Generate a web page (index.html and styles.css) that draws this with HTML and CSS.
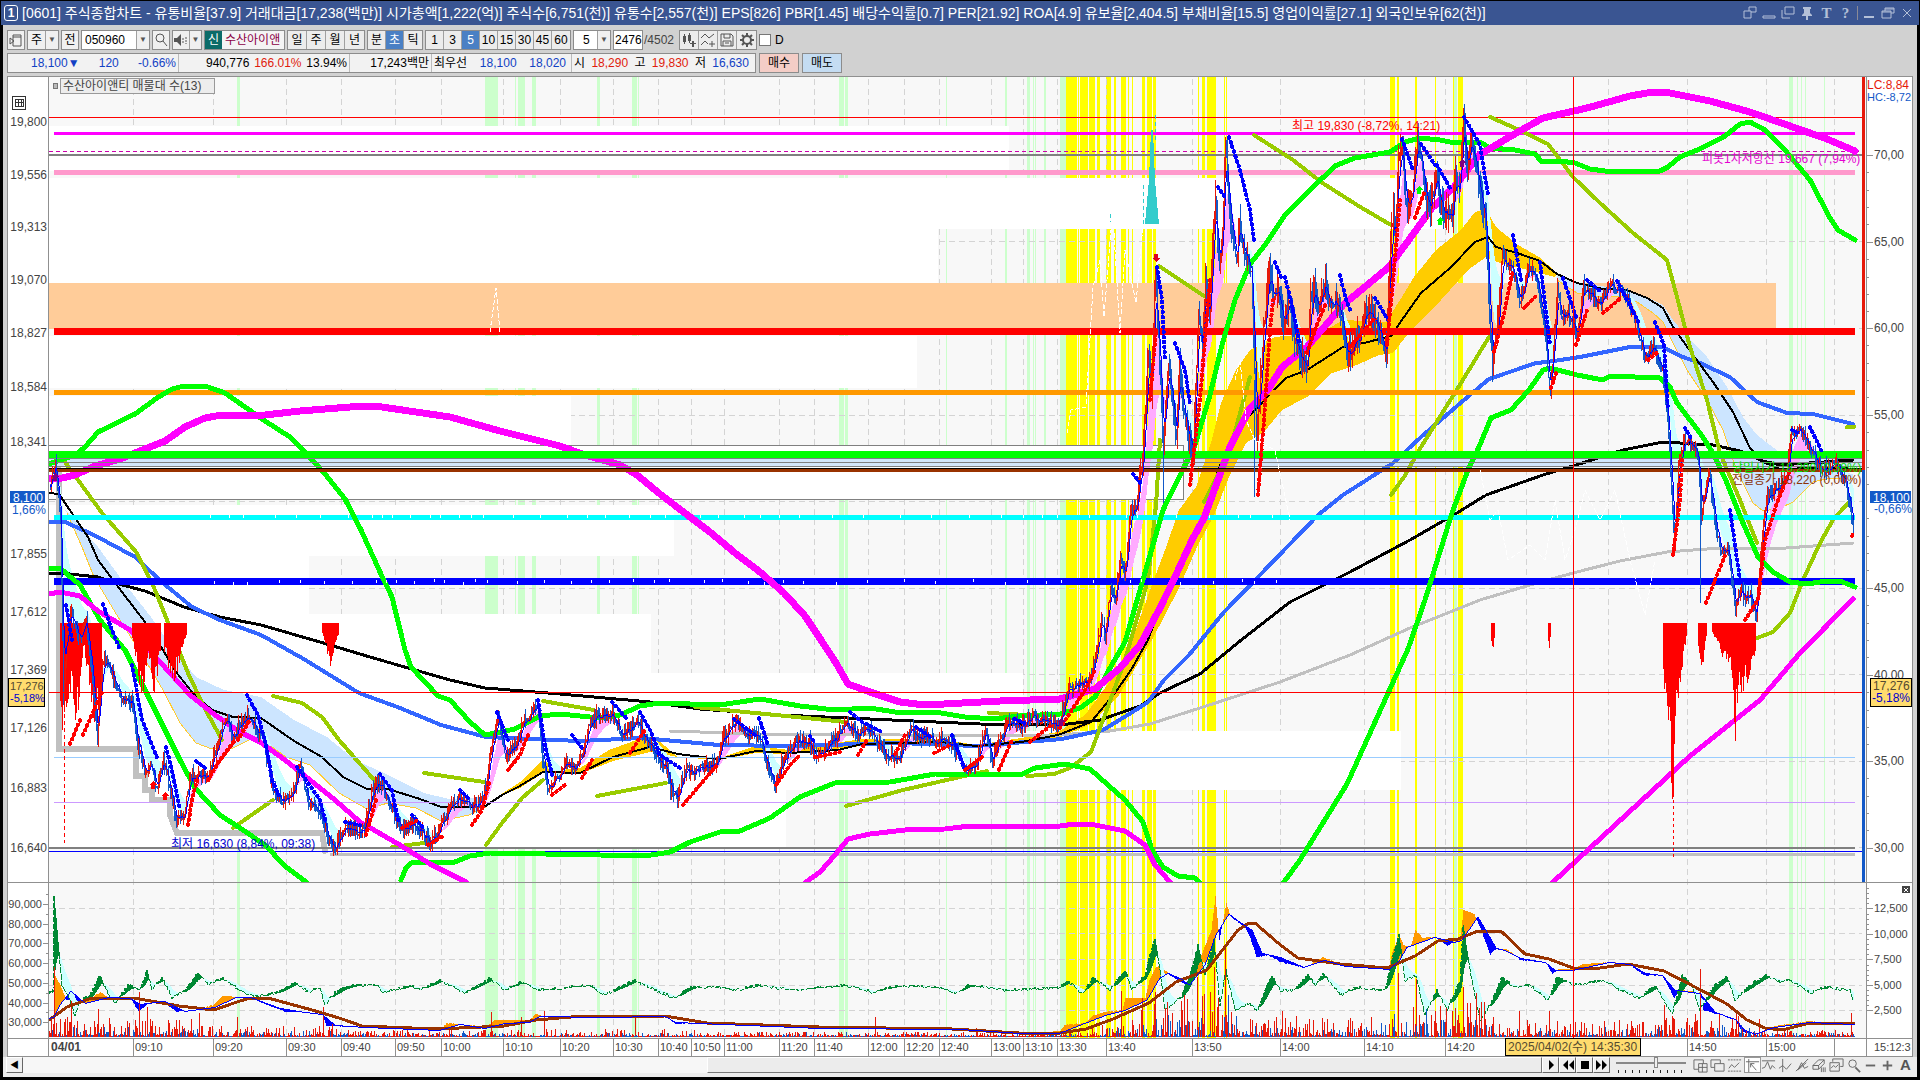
FILE: index.html
```html
<!DOCTYPE html>
<html lang="ko">
<head>
    <meta charset="UTF-8">
    <meta name="viewport" content="width=device-width, initial-scale=1.0">
    <title>[0601] 주식종합차트</title>
    <link rel="stylesheet" href="styles.css">
</head>
<body>
    <header class="titlebar">
        <span class="badge">1</span>
        <h1>[0601] 주식종합차트 - 유통비율[37.9] 거래대금[17,238(백만)] 시가총액[1,222(억)] 주식수[6,751(천)] 유통수[2,557(천)] EPS[826] PBR[1.45] 배당수익률[0.7] PER[21.92] ROA[4.9] 유보율[2,404.5] 부채비율[15.5] 영업이익률[27.1] 외국인보유[62(천)]</h1>
        <div class="window-buttons">
            <button aria-label="새 창"><svg viewBox="0 0 14 14"><path d="M1 5h7v7H1zM6 5V1h7v5H8"/></svg></button>
            <button aria-label="접기"><svg viewBox="0 0 14 14"><path d="M1 10h12v2H1z"/></svg></button>
            <button aria-label="복사"><svg viewBox="0 0 14 14"><path d="M4 1h9v7H4zM1 4v8h8"/></svg></button>
            <button aria-label="고정"><svg viewBox="0 0 14 14"><path class="solid" d="M3 1h8v2h-1v4l2 2v1H8v4H6v-4H2V9l2-2V3H3z"/></svg></button>
            <button class="serif">T</button>
            <button class="serif">?</button>
            <i></i>
            <button aria-label="최소화"><svg viewBox="0 0 14 14"><path class="solid" d="M2 10h10v2H2z"/></svg></button>
            <button aria-label="이전 크기"><svg viewBox="0 0 14 14"><path d="M4 5V2h9v5h-3M1 5h9v7H1zM4 3h9M1 6h9"/></svg></button>
            <button aria-label="닫기"><svg viewBox="0 0 14 14"><path d="M3 3l8 8M11 3l-8 8"/></svg></button>
        </div>
    </header>

    <main class="window">
        <div class="toolbar">
            <button class="tool" aria-label="메뉴"><svg viewBox="0 0 16 16"><path d="M5 3h8v11H5zM5 5h8M2 6v6l4-3z"/></svg></button>
            <div class="combo"><button>주</button><button class="arrow" aria-label="목록">▼</button></div>
            <button class="tool">전</button>
            <div class="combo code"><input type="text" value="050960" aria-label="종목코드"><button class="arrow" aria-label="종목 목록">▼</button></div>
            <button class="tool" aria-label="검색"><svg viewBox="0 0 16 16"><circle cx="7" cy="6" r="4"/><path d="M10 9l4 5"/></svg></button>
            <div class="combo sound"><button aria-label="소리"><svg viewBox="0 0 16 16"><path class="solid" d="M1 6h3l4-4v12l-4-4H1z"/><path d="M10 6v5M13 5v7" stroke-dasharray="2 1"/></svg></button><button class="arrow" aria-label="소리 목록">▼</button></div>
            <div class="stock"><b>신</b><span>수산아이앤</span></div>
            <div class="group wide"><button>일</button><button>주</button><button>월</button><button>년</button></div>
            <div class="group"><button>분</button><button class="on">초</button><button>틱</button></div>
            <div class="group"><button>1</button><button>3</button><button class="on">5</button><button>10</button><button>15</button><button>30</button><button>45</button><button>60</button></div>
            <div class="combo unit"><input type="text" value="5" aria-label="단위"><button class="arrow" aria-label="단위 목록">▼</button></div>
            <label class="count"><input type="text" value="2476" aria-label="봉 개수">/4502</label>
            <div class="group icons">
                <button aria-label="봉 추가"><svg viewBox="0 0 16 16"><path class="solid" d="M2 4h3v6H2zM7 3h3v6H7zM3 2h1v10H3zM8 1h1v10H8zM11 9h2v2h2v1h-2v3h-2v-3H9v-1h2z"/></svg></button>
                <button aria-label="지표 추가"><svg viewBox="0 0 16 16"><path d="M1 6l4-4 4 4 5-4M1 13l4-4 3 3M12 9v6M9 12h6"/></svg></button>
                <button aria-label="저장"><svg viewBox="0 0 16 16"><path d="M2 2h10l2 2v10H2zM5 2v4h6V2M4 14V9h8v5M6 11h4"/></svg></button>
                <button aria-label="설정"><svg viewBox="0 0 16 16"><circle class="gear" cx="8" cy="8" r="4"/><path class="teeth" d="M8 1v3M8 12v3M1 8h3M12 8h3M3 3l2 2M11 11l2 2M13 3l-2 2M5 11l-2 2"/></svg></button>
            </div>
            <label class="check"><input type="checkbox">D</label>
        </div>

        <div class="quote">
            <div class="quote-panel">
                <div class="cell c1 down"><span>18,100▼</span><span>120</span><span>-0.66%</span></div>
                <div class="cell c2"><span>940,776</span><span class="up">166.01%</span><span>13.94%</span></div>
                <div class="cell c3"><span>17,243백만</span></div>
                <div class="cell c4"><span>최우선</span><span class="down">18,100</span><span class="down">18,020</span></div>
                <div class="cell c5"><span>시</span><span class="up">18,290</span><span>고</span><span class="up">19,830</span><span>저</span><span class="down">16,630</span></div>
            </div>
            <button class="buy">매수</button>
            <button class="sell">매도</button>
        </div>

        <svg class="chart" viewBox="7 76 1906 981">
            <defs>
                <clipPath id="priceClip"><rect x="49" y="77" width="1813" height="805"/></clipPath>
            </defs>
            <rect class="paper" x="7" y="76" width="1906" height="981"/>
            <rect class="plot" x="49" y="77" width="1817" height="961"/>
            <g id="stripes"></g>
            <g id="grid"></g>
            <g id="profile"></g>
            <g id="price" clip-path="url(#priceClip)"></g>
            <g id="volume"></g>

            <g class="note">
                <rect class="mark" x="53" y="83" width="4" height="5"/>
                <rect class="legend" x="60" y="78" width="154" height="15"/>
                <text x="63" y="90">수산아이앤티 매물대 수(13)</text>
                <text class="t-red" x="1292" y="130">최고 19,830 (-8,72%, 14:21)</text>
                <text class="t-navy" x="171" y="848">최저 16,630 (8,84%, 09:38)</text>
                <text class="t-pink" x="1702" y="163">피봇1차저항선 19,667 (7,94%)</text>
                <text class="t-green" x="1732" y="472">당일시가 18,290 (0,38%)</text>
                <text class="t-brown" x="1732" y="484">전일종가 18,220 (0,00%)</text>
            </g>

            <g class="frame">
                <path d="M7 76.5H1913M7.500 76V1057M48.500 77V1057M1866.500 77V1057M1912.500 76V1057M7 882.500H1913M7 1038.500H1913M7 1056.500H1913"/>
                <path class="limit-up" d="M1863.500 77V470"/>
                <path class="limit-down" d="M1863.500 470V882"/>
                <path class="cross" d="M49 692.500H1862M1573.500 77V1038"/>
            </g>
            <g id="axes" class="axis"></g>

            <g class="tags">
                <rect class="tag-blue" x="10" y="491" width="35" height="12"/>
                <text class="t-white" x="13" y="502">8,100</text>
                <text class="t-blue" x="12" y="514">1,66%</text>
                <rect class="tag-blue" x="1870" y="491" width="41" height="12"/>
                <text class="t-white" x="1873" y="502">18,100</text>
                <text class="t-blue" x="1874" y="513">-0,66%</text>
                <rect class="tag-yellow" x="8.500" y="678.500" width="36" height="28"/>
                <text class="t-gray small" x="10" y="690">17,276</text>
                <text class="t-navy small" x="10" y="702">-5,18%</text>
                <rect class="tag-yellow" x="1870.500" y="678.500" width="41" height="28"/>
                <text class="t-gray" x="1873" y="690">17,276</text>
                <text class="t-navy" x="1872" y="702">-5,18%</text>
                <rect class="tag-yellow" x="1505.500" y="1038.500" width="135" height="17"/>
                <text class="t-gray" x="1508" y="1051">2025/04/02(수) 14:35:30</text>
                <text class="t-lc" x="1867" y="89">LC:8,84</text>
                <text class="t-hc small" x="1867" y="101">HC:-8,72</text>
                <rect class="close-box" x="1902" y="886" width="8" height="7"/>
                <path class="close-x" d="M1904 888l4 4M1908 888l-4 4"/>
            </g>
            <svg class="frame-icon" x="12" y="96" width="14" height="14" viewBox="0 0 14 14"><path d="M.5.5h13v13H.5zM3 3.500h8v7H3zM3 6.500h8M6.500 3v8M9.500 3v8"/></svg>
        </svg>

        <footer class="bottom">
            <button class="key" aria-label="왼쪽">◀</button>
            <div class="track"><div class="thumb"></div></div>
            <div class="keys">
                <button class="key" aria-label="재생"><svg viewBox="0 0 12 12"><path class="solid" d="M4 1l5 5-5 5z"/></svg></button>
                <button class="key" aria-label="뒤로"><svg viewBox="0 0 12 12"><path class="solid" d="M6 1v10L1 6zM12 1v10L7 6z"/></svg></button>
                <button class="key" aria-label="정지"><svg viewBox="0 0 12 12"><path class="solid" d="M2 2h8v8H2z"/></svg></button>
                <button class="key" aria-label="앞으로"><svg viewBox="0 0 12 12"><path class="solid" d="M0 1v10l5-5zM6 1v10l5-5z"/></svg></button>
            </div>
            <div class="speed"><input type="range" min="0" max="100" value="57" aria-label="속도"></div>
            <div class="draw-tools">
                <button aria-label="창 추가"><svg viewBox="0 0 16 16"><path d="M1 2h10v10H1z"/><path class="over" d="M6 6h9v9H6z"/><path d="M6 10h9M10 6v9"/></svg></button>
                <button aria-label="겹치기"><svg viewBox="0 0 16 16"><path d="M1 2h10v8H1z"/><path class="over" d="M5 6h10v8H5z"/></svg></button>
                <button aria-label="영역"><svg viewBox="0 0 16 16"><path d="M1 2h14M1 14h14" stroke-dasharray="2 1"/><path d="M2 11l3-4 3 3 5-5"/></svg></button>
                <button class="on" aria-label="십자선"><svg viewBox="0 0 16 16"><path d="M1 4h14M4 1v14M6 6l6 7M6 10V6h4"/></svg></button>
                <button aria-label="추세선"><svg viewBox="0 0 16 16"><path d="M1 3h14M1 11l3-1 3-6 3 8 2-4 3 3"/></svg></button>
                <button aria-label="수직선"><svg viewBox="0 0 16 16"><path d="M5 1v14M1 11l4-3 4 4 5-6"/></svg></button>
                <button aria-label="그리기"><svg viewBox="0 0 16 16"><path d="M1 14L14 1M3 13l4-8 3 6 4-2M4 12l8-7"/></svg></button>
                <button aria-label="지우개"><svg viewBox="0 0 16 16"><path d="M1 8l6-6h6l-6 6zM1 8h6v4H1zM7 12l6-6V2M10 10v5M12 10v5M14 10v5"/></svg></button>
                <button aria-label="보기"><svg viewBox="0 0 16 16"><path d="M4 4V1h11v8h-3M1 5h10v9H1zM2 11l3-3 2 2 3-3"/></svg></button>
                <button aria-label="확대경"><svg viewBox="0 0 16 16"><circle cx="7" cy="6" r="4"/><path class="bold" d="M10 10l5 5"/></svg></button>
                <button aria-label="축소"><svg viewBox="0 0 16 16"><path class="bold" d="M3 8h10"/></svg></button>
                <button aria-label="확대"><svg viewBox="0 0 16 16"><path class="bold" d="M3 8h10M8 3v10"/></svg></button>
                <button class="letter">A</button>
            </div>
        </footer>
    </main>
    <script src="chart.js"></script>
</body>
</html>
```
FILE: styles.css
```css
* {
    box-sizing: border-box;
}

body {
    margin: 0;
    padding: 1px 1px 3px;
    min-height: 100vh;
    background-color: black;
    font-family: "Liberation Sans", "Noto Sans CJK KR", sans-serif;
    font-size: 12px;
    line-height: 16px;
}

button,
input {
    font: inherit;
    color: inherit;
    margin: 0;
    padding: 0;
    border: none;
    border-radius: 0;
    background: none;
}

svg {
    display: block;
}

/* title bar */
.titlebar {
    display: flex;
    align-items: center;
    gap: 4px;
    height: 24px;
    padding: 0 4px 0 3px;
    background-color: #3a5592;
    color: white;
}

.titlebar h1 {
    flex: 1;
    margin: 0;
    white-space: nowrap;
    font-size: 14px;
    font-weight: normal;
    line-height: 20px;
}

.badge {
    width: 14px;
    height: 16px;
    border: 1px solid white;
    border-radius: 3px;
    font-weight: bold;
    line-height: 14px;
    text-align: center;
}

.window-buttons {
    display: flex;
    align-items: center;
    gap: 4px;
    color: #b4c0d8;
}

.window-buttons button {
    width: 15px;
    height: 16px;
}

.window-buttons svg {
    width: 14px;
    height: 14px;
    fill: none;
    stroke: #b4c0d8;
}

.window-buttons .serif {
    font: bold 15px "Liberation Serif", serif;
}

.window-buttons i {
    width: 1px;
    height: 14px;
    background-color: #8a8a96;
}

.window-buttons .solid {
    fill: #b4c0d8;
    stroke: none;
}

/* toolbar */
.window {
    margin: 0 2px;
    padding: 5px 4px 0;
    background-color: #d1d1d1;
}

.toolbar {
    display: flex;
    gap: 2px;
    height: 20px;
}

.toolbar svg {
    width: 16px;
    height: 16px;
    margin: auto;
    fill: none;
    stroke: #555;
}

.toolbar .solid {
    fill: #555;
    stroke: none;
}

.gear,
.teeth {
    stroke-width: 2;
}

.tool,
.combo,
.group {
    border: 1px solid #8c8c8c;
    background-color: #f0f0f0;
}

.tool {
    width: 18px;
}

.combo,
.group {
    display: flex;
}

.combo button {
    width: 17px;
}

.combo .arrow {
    width: 13px;
    border-left: 1px solid #a0a0a0;
    background-color: #f0f0f0;
    color: #555;
    font-size: 8px;
}

.combo input {
    min-width: 0;
    flex: 1;
    padding-left: 3px;
    background-color: white;
}

.code {
    width: 69px;
}

.sound {
    width: 30px;
}

.unit {
    width: 38px;
}

.unit input {
    padding-left: 9px;
}

.stock {
    display: flex;
    width: 81px;
    border: 1px solid #8c8c8c;
    background-color: #f4f4f4;
    color: #8b0045;
    line-height: 18px;
    white-space: nowrap;
}

.stock b {
    width: 17px;
    margin-right: 3px;
    background-color: #0b6b68;
    color: white;
    font-weight: normal;
    text-align: center;
}

.group button {
    width: 18px;
    border-right: 1px solid #a0a0a0;
    background-color: #ececec;
}

.group.wide button {
    width: 19px;
}

.group button:last-child {
    border-right: none;
}

.group .on {
    background-color: #4a80c4;
    color: white;
}

.count {
    display: flex;
    line-height: 20px;
    width: 64px;
    color: #444;
}

.count input {
    width: 30px;
    margin-right: 1px;
    padding-left: 1px;
    border: 1px solid #8c8c8c;
    background-color: white;
    color: black;
}

.icons button {
    width: 19px;
}

.check {
    display: flex;
    align-items: center;
    gap: 4px;
}

.check input {
    appearance: none;
    width: 12px;
    height: 12px;
    border: 1px solid #777;
    background-color: white;
}

/* quote row */
.quote {
    display: flex;
    gap: 3px;
    height: 20px;
    margin: 3px 0;
}

.quote-panel {
    display: flex;
    border: 1px solid #8c8c8c;
    background-color: #f2f2f2;
    line-height: 18px;
    white-space: nowrap;
}

.cell {
    display: flex;
    justify-content: space-between;
    padding: 0 2px;
    border-right: 1px solid #bbb;
}

.cell:last-child {
    border-right: none;
}

.c1 {
    width: 171px;
    padding-left: 23px;
}

.c2 {
    width: 171px;
    padding-left: 27px;
}

.c3 {
    width: 82px;
    justify-content: flex-end;
}

.c4 {
    width: 140px;
    padding-right: 5px;
}

.c5 {
    width: 183px;
    padding-right: 6px;
}

.up {
    color: #e01b0c;
}

.down {
    color: #1141c4;
}

.buy,
.sell {
    width: 40px;
    border: 1px solid #8c8c8c;
}

.buy {
    background-color: #f4cdc6;
}

.sell {
    background-color: #c4dcf2;
}

/* chart */
.chart {
    width: 100%;
    height: auto;
    shape-rendering: crispEdges;
    fill: none;
}

.paper {
    fill: white;
}

.plot {
    fill: #f8f8f8;
}

.grid-line {
    stroke: #d4d4d4;
    stroke-dasharray: 6 4;
}

.frame path {
    stroke: #909090;
}

.frame .limit-up {
    stroke: #e6190a;
    stroke-width: 3;
}

.frame .limit-down {
    stroke: #1259c8;
    stroke-width: 3;
}

.frame .cross {
    stroke: red;
}

.frame-icon {
    stroke: #333;
}

.chart text {
    font-size: 12px;
    fill: #444;
}

.chart .small {
    font-size: 11px;
}

.axis path {
    stroke: #909090;
}

.axis .left {
    text-anchor: end;
}

.axis .day {
    font-weight: bold;
}

.legend {
    fill: #ededed;
    stroke: #999;
}

.mark {
    fill: #bbb;
    stroke: #777;
}

.chart .t-red {
    fill: red;
}

.chart .t-navy {
    fill: #0000d0;
}

.chart .t-pink {
    fill: #e400d0;
}

.chart .t-green {
    fill: #00e000;
}

.chart .t-brown {
    fill: #8a3208;
}

.chart .t-white {
    fill: white;
}

.chart .t-blue,
.chart .t-hc {
    fill: #1259c8;
}

.chart .t-gray {
    fill: #554a30;
}

.chart .t-lc {
    fill: #e6190a;
}

.tag-blue {
    fill: #1259c8;
}

.tag-yellow {
    fill: #ffdc6e;
    stroke: black;
}

.close-box {
    fill: #444;
}

.close-x {
    stroke: white;
}

/* bottom bar */
.bottom {
    display: flex;
    height: 20px;
    margin: 0 -4px;
    padding: 0 3px 4px;
    background-color: #ececec;
}

.key {
    width: 17px;
    height: 16px;
    border: 1px solid;
    border-color: #fff #666 #666 #fff;
    background-color: #f0f0f0;
    font-size: 9px;
    line-height: 12px;
}

.key svg {
    width: 12px;
    height: 12px;
    margin: auto;
}

.track {
    display: flex;
    flex: 1;
    background-color: #f7f7f7;
}

.thumb {
    width: 55%;
    margin-left: auto;
    border: 1px solid;
    border-color: #fff #777 #777 #fff;
    background-color: #ececec;
}

.keys {
    display: flex;
    width: 69px;
}

.speed {
    width: 82px;
    padding: 0 5px;
    background: repeating-linear-gradient(90deg, #222 0 1px, transparent 1px 7px) 7px 13px / 68px 3px no-repeat;
}

.speed input {
    display: block;
    appearance: none;
    width: 70px;
    height: 10px;
    background: linear-gradient(#888, #888) 0 5px / 100% 2px no-repeat;
}

.speed input::-webkit-slider-thumb {
    appearance: none;
    width: 4px;
    height: 11px;
    border: 1px solid #888;
    background-color: #f0f0f0;
}

.draw-tools {
    display: flex;
}

.draw-tools button {
    width: 17px;
    height: 16px;
}

.draw-tools .on {
    border: 1px solid #999;
    background-color: white;
}

.draw-tools svg {
    width: 15px;
    height: 15px;
    fill: none;
    stroke: #666;
}

.draw-tools .over {
    fill: #ececec;
}

.draw-tools .bold {
    stroke-width: 2;
}

.draw-tools .letter {
    color: #555;
    font-size: 15px;
    font-weight: bold;
}
```
FILE: chart.js
```javascript
const SVG_NS = 'http://www.w3.org/2000/svg';

const stripes = document.getElementById('stripes');
const grid = document.getElementById('grid');
const profile = document.getElementById('profile');
const price = document.getElementById('price');
const volume = document.getElementById('volume');
const axes = document.getElementById('axes');

// fixed seed, so every load draws the same bars
let seed = 7;
function random() {
    seed = (seed * 16807) % 2147483647;
    return seed / 2147483647;
}

function add(parent, name, attrs, text) {
    const node = document.createElementNS(SVG_NS, name);
    for (const key in attrs) node.setAttribute(key, attrs[key]);
    if (text) node.textContent = text;
    parent.appendChild(node);
}

function rect(parent, x, y, width, height, fill) {
    add(parent, 'rect', { x, y, width, height, fill });
}

// "x,y x,y ..." -> [[x, y], ...]
function points(str) {
    return str.trim().split(/\s+/).map(p => p.split(',').map(Number));
}

function line(parent, pts, color, width, extra) {
    add(parent, 'polyline', Object.assign({
        points: pts, stroke: color, 'stroke-width': width,
        'stroke-linejoin': 'round', 'stroke-linecap': 'round'
    }, extra));
}

function hline(y, color, width, x1 = 54, x2 = 1855) {
    add(price, 'path', { d: `M${x1} ${y}H${x2}`, stroke: color, 'stroke-width': width });
}

function sample(pts, noise) {
    const out = [];
    let i = 0;
    for (let x = pts[0][0]; x <= pts[pts.length - 1][0]; x++) {
        while (i < pts.length - 2 && x > pts[i + 1][0]) i++;
        const [x1, y1] = pts[i];
        const [x2, y2] = pts[i + 1];
        out.push([x, y1 + (y2 - y1) * (x - x1) / (x2 - x1) + (random() - 0.5) * noise]);
    }
    return out;
}

function average(series, length) {
    let value = series[0][1];
    return series.map(([x, y]) => {
        value += (y - value) * 2 / (length + 1);
        return [x, value];
    });
}

function between(parent, a, b, above, below) {
    let up = '';
    let down = '';
    for (let i = 0; i < a.length; i++) {
        const top = Math.round(Math.min(a[i][1], b[i][1]));
        const bottom = Math.round(Math.max(a[i][1], b[i][1]));
        const d = `M${a[i][0] + 0.5} ${top}V${bottom}`;
        if (a[i][1] < b[i][1]) up += d;
        else down += d;
    }
    add(parent, 'path', { d: up, stroke: above });
    add(parent, 'path', { d: down, stroke: below });
}

// signal stripes
[[237, 3], [485, 13], [515, 1], [518, 7], [532, 4], [597, 3], [632, 5], [638, 1], [839, 5], [845, 3], [946, 1], [1005, 2],
 [1027, 3], [1033, 1], [1035, 1], [1044, 2], [1060, 6], [1454, 3], [1789, 4], [1797, 1], [1801, 1], [1805, 1], [1824, 1]]
    .forEach(([x, w]) => rect(stripes, x, 77, w, 961, '#ccffcc'));
[[1066, 11], [1078, 1], [1080, 8], [1089, 6], [1097, 3], [1106, 5], [1114, 2], [1121, 5], [1128, 1], [1132, 1], [1142, 3],
 [1147, 5], [1153, 3], [1198, 1], [1202, 3], [1207, 9], [1224, 1], [1226, 1], [1390, 5], [1397, 2], [1415, 2], [1435, 1],
 [1453, 1], [1458, 5]]
    .forEach(([x, w]) => rect(stripes, x, 77, w, 961, 'yellow'));

// time axis and grid
const times = [[49, '04/01'], [133, '09:10'], [213, '09:20'], [286, '09:30'], [341, '09:40'], [395, '09:50'], [441, '10:00'],
    [503, '10:10'], [560, '10:20'], [613, '10:30'], [658, '10:40'], [691, '10:50'], [724, '11:00'], [779, '11:20'],
    [814, '11:40'], [868, '12:00'], [904, '12:20'], [939, '12:40'], [991, '13:00'], [1023, '13:10'], [1057, '13:30'],
    [1106, '13:40'], [1192, '13:50'], [1280, '14:00'], [1364, '14:10'], [1445, '14:20'], [1526, ''], [1608, ''],
    [1687, '14:50'], [1766, '15:00'], [1834, '']];
times.forEach(([x, label], i) => {
    if (i) {
        add(grid, 'path', { class: 'grid-line', d: `M${x}.5 79V1038` });
        if (x !== 1608 && x !== 1526) add(axes, 'path', { d: `M${x}.5 1038V1056` });
    }
    if (label) add(axes, 'text', { x: x + 2, y: 1051, class: i ? 'small' : 'day' }, label);
});
add(axes, 'text', { x: 1874, y: 1051, class: 'small' }, '15:12:3');

[155, 241, 328, 415, 501, 588, 674, 761, 847, 908, 933, 959, 985, 1010].forEach(y =>
    add(grid, 'path', { class: 'grid-line', d: `M49 ${y}.5H1862` }));

[['19,800', 122], ['19,556', 175], ['19,313', 227], ['19,070', 280], ['18,827', 333], ['18,584', 387], ['18,341', 442],
 ['17,855', 554], ['17,612', 612], ['17,369', 670], ['17,126', 728], ['16,883', 788], ['16,640', 848]]
    .forEach(([label, y]) => add(axes, 'text', { x: 47, y: y + 4, class: 'left' }, label));
['70,00', '65,00', '60,00', '55,00', '', '45,00', '40,00', '35,00', '30,00'].forEach((label, i) => {
    const y = Math.round(155 + i * 86.6);
    if (label) {
        add(axes, 'path', { d: `M1867 ${y}.5h6` });
        add(axes, 'text', { x: 1874, y: y + 4 }, label);
    }
    for (let k = 1; k < 5 && i < 8; k++) add(axes, 'path', { d: `M1867 ${Math.round(y + k * 17.3)}.5h2` });
});
['90,000', '80,000', '70,000', '60,000', '50,000', '40,000', '30,000'].forEach((label, i) => {
    const y = Math.round(904 + i * 19.7);
    add(axes, 'path', { d: `M43 ${y}.5h5M46 ${y - 10}.5h2` });
    add(axes, 'text', { x: 42, y: y + 4, class: 'left small' }, label);
});
['12,500', '10,000', '7,500', '5,000', '2,500'].forEach((label, i) => {
    const y = Math.round(908 + i * 25.5);
    add(axes, 'path', { d: `M1867 ${y}.5h6M1867 ${y - 5}.5h2M1867 ${y - 10}.5h2M1867 ${y - 15}.5h2M1867 ${y - 20}.5h2` });
    add(axes, 'text', { x: 1874, y: y + 4, class: 'small' }, label);
});

// volume by price
[[126, 45, 1009], [178, 51, 1443], [229, 54, 938], [336, 52, 917], [396, 49, 571], [445, 54, 1183], [505, 51, 674],
 [556, 58, 309], [614, 59, 651], [673, 58, 1023], [731, 59, 1401], [790, 58, 786]]
    .forEach(([y, h, x]) => rect(profile, 49, y, x - 49, h, 'white'));
rect(profile, 49, 283, 1727, 46, '#ffcc99');
rect(profile, 49, 459, 1813, 7, '#d2e6fb');

// support and resistance lines
hline(117.5, 'red', 1, 49, 1862);
hline(133.5, 'magenta', 3);
add(price, 'path', { d: 'M49 151.5H1862', stroke: '#cc00aa', 'stroke-dasharray': '4 3' });
hline(155, '#808080', 2, 49, 1862);
hline(172.5, '#ff99cc', 5);
add(price, 'path', { d: 'M49 445.5H1183.5V499.5H49', stroke: '#808080' });

// clouds
function cloud(upper, lower, fill) {
    add(price, 'polygon', { points: upper + ' ' + points(lower).reverse().join(' '), fill });
}
const leftLow = '67,513 82,547 94,577 118,617 141,653 163,690 180,723 196,743 212,749 233,748 253,738 265,742 286,757 310,765 339,793 367,809 388,803 416,808 441,821 469,815 486,807';
cloud('64,508 98,547 122,580 151,617 176,653 196,677 224,690 261,697 294,720 327,737 355,760 384,773 424,793 449,799 482,797', leftLow, '#cce5ff');
line(price, leftLow, '#ffcc33', 1);
cloud('500,795 520,782 543,760 560,770 580,768 609,750 642,738 658,740 678,757 719,758 756,746 789,750 862,739 940,739 976,745 1021,738 1058,732 1085,715 1111,680 1131,643 1150,590 1165,550 1179,510 1196,487 1211,443 1221,403 1236,370 1250,350 1275,337 1296,335 1321,333 1343,320 1386,322 1400,300 1414,277 1436,250 1461,230 1475,212 1486,209 1496,227 1518,245 1539,257 1557,273',
    '500,796 520,788 543,773 580,774 613,761 650,752 678,757 719,760 756,753 789,754 862,746 940,744 976,747 1021,744 1058,738 1091,724 1119,695 1152,640 1178,590 1198,545 1214,515 1229,477 1246,443 1264,432 1282,410 1307,397 1332,373 1357,365 1379,355 1393,353 1411,330 1432,310 1450,290 1468,270 1486,257 1500,263 1520,268 1555,277', '#ffcc00');
const rightLow = '1557,280 1577,293 1597,297 1620,296 1637,302 1653,313 1663,322 1673,343 1687,370 1707,400 1723,430 1733,460 1743,483 1753,503 1763,511 1780,508 1793,502 1813,482 1830,478 1853,478';
cloud('1557,275 1580,283 1607,287 1627,289 1647,297 1663,305 1673,320 1687,337 1707,357 1727,387 1743,417 1757,435 1770,445 1778,451 1790,457 1810,467 1853,474', rightLow, '#cce5ff');
line(price, rightLow, '#ffcc33', 1);

// lowest-low steps
line(price, '59,470 59,749 136,749 136,776 145,776 145,790 152,790 152,800 170,800 170,815 177,833 322,833 325,851', '#c0c0c0', 6, { 'stroke-linejoin': 'miter' });
hline(854, '#c0c0c0', 3, 330, 1855);

const series = sample(points(`49,490 55,462 60,520 63,700 66,640 70,610 80,640 86,620 92,680 97,740 102,660 108,665 114,680 122,700
    132,702 136,740 144,770 150,765 156,790 163,760 170,790 176,822 184,815 190,775 200,775 208,777 215,750 226,715 232,740
    240,725 250,715 256,730 264,745 270,780 278,800 290,800 300,768 308,800 322,815 330,845 336,846 345,825 355,832 364,830
    372,790 380,783 388,800 396,822 404,830 412,822 420,830 428,842 436,838 446,815 452,800 462,800 472,810 480,802 486,785
    492,740 498,718 505,755 515,745 525,720 537,705 542,760 548,790 556,780 566,765 576,770 583,750 590,720 600,715 612,715
    622,735 628,730 636,720 645,740 655,755 665,765 670,790 677,800 684,770 695,772 705,765 716,765 722,740 735,722 748,735
    760,740 768,770 775,785 782,760 795,742 808,740 815,760 830,745 845,725 858,735 870,730 885,755 900,758 910,730 925,740
    945,740 955,750 965,770 975,768 985,730 992,760 1000,740 1010,720 1020,728 1030,718 1045,718 1058,728 1068,690 1090,680
    1096,650 1101,620 1105,640 1110,585 1115,600 1120,555 1125,575 1130,510 1136,510 1142,460 1145,410 1148,350 1151,390
    1155,270 1158,340 1163,450 1168,360 1172,400 1176,440 1179,370 1182,400 1188,440 1193,450 1198,310 1202,350 1205,280
    1209,320 1212,250 1215,200 1219,270 1222,240 1225,140 1229,210 1233,240 1236,265 1239,220 1243,250 1251,270 1256,440
    1260,380 1263,330 1269,270 1273,300 1277,290 1283,325 1289,300 1295,345 1301,360 1307,365 1310,300 1314,290 1318,310
    1325,280 1330,310 1335,300 1341,320 1347,360 1353,345 1360,335 1366,310 1375,320 1386,355 1390,240 1393,210 1395,240
    1398,160 1402,150 1406,210 1411,200 1417,140 1421,160 1426,200 1430,212 1436,170 1440,205 1444,212 1452,215 1455,180
    1459,190 1463,120 1467,175 1471,140 1476,170 1480,200 1485,220 1489,320 1492,362 1498,320 1502,250 1508,270 1512,265
    1517,295 1520,300 1528,265 1536,280 1544,330 1550,395 1557,290 1562,320 1568,315 1577,335 1583,285 1592,295 1600,305
    1610,285 1625,295 1635,320 1645,360 1652,345 1662,370 1668,430 1674,550 1678,460 1684,440 1692,445 1698,460 1701,515
    1708,470 1716,530 1720,550 1728,550 1735,610 1740,590 1745,600 1750,595 1756,615 1760,550 1766,500 1772,490 1780,485
    1787,475 1790,435 1800,430 1810,450 1822,470 1835,465 1845,480 1850,510 1853,530`), 10);
const fast = average(series, 9);
const slow = average(series, 26);
between(price, fast, slow, '#ffaaff', '#ccffff');

// moving averages
line(price, '670,731 760,734 900,735 1000,736 1060,735 1110,731 1150,724 1200,708 1280,682 1350,655 1410,628 1480,600 1530,585 1573,573 1620,561 1667,552 1720,548 1773,549 1853,543', '#c0c0c0', 3);
line(price, '49,574 60,573 98,577 122,585 145,591 184,607 220,617 261,625 320,642 370,657 408,668 450,680 485,688 560,694 650,702 700,709 780,715 870,719 980,724 1060,725 1100,720 1140,706 1160,693 1200,674 1240,641 1290,602 1350,572 1410,540 1457,513 1486,495 1543,475 1573,466 1623,450 1663,442 1713,445 1740,451 1763,461 1780,465 1853,460', 'black', 3);
line(price, '49,522 65,522 94,535 135,557 163,583 192,607 220,620 261,635 302,658 359,693 400,708 441,725 486,737 580,741 642,738 719,745 789,746 899,743 976,746 1013,743 1062,739 1103,730 1131,713 1148,702 1164,680 1189,655 1224,612 1260,575 1318,515 1343,495 1393,463 1421,437 1464,400 1489,379 1536,363 1547,362 1580,357 1630,347 1663,347 1680,356 1700,363 1730,377 1757,402 1787,413 1813,414 1853,424', '#3366ff', 4);
line(price, '49,493 59,494 65,503 88,537 98,560 122,592 145,622 163,650 176,672 192,692 212,710 233,717 261,718 294,741 322,757 343,777 367,789 388,789 420,799 441,807 484,807 502,795 518,787 543,772 580,773 613,757 650,747 678,754 719,759 756,751 789,753 838,750 862,744 940,742 976,746 1021,742 1058,735 1091,722 1115,693 1131,670 1148,640 1163,600 1180,560 1203,515 1220,465 1243,423 1271,393 1286,378 1307,370 1343,347 1364,343 1391,336 1404,317 1421,293 1450,268 1475,242 1488,237 1496,247 1517,253 1540,261 1557,274 1577,283 1603,289 1627,290 1647,298 1663,308 1673,327 1693,355 1713,382 1733,412 1750,448 1763,462 1780,469 1847,467', 'black', 2);

// olive span
['65,462 78,480 102,513 137,553 155,590 171,630 188,673 204,707 222,740', '273,696 302,703 322,717 339,740 376,782', '424,773 484,782',
 '233,828 273,800', '392,847 424,843', '486,845 502,823 522,798 543,780', '543,701 594,710', '597,796 666,783', '695,707 846,722',
 '846,806 903,790 960,777 987,771', '989,713 1027,715', '1027,776 1054,774 1070,768 1091,752 1103,720 1125,660 1148,580 1156,505 1160,440',
 '1159,266 1204,296', '1254,135 1293,160 1321,182 1357,205 1391,225', '1204,502 1229,453 1250,377', '1391,495 1404,477 1421,447 1461,383 1489,337',
 '1490,117 1517,129 1548,144 1573,177 1600,203 1633,233 1667,260 1677,297 1690,347 1707,400 1720,453 1740,500 1757,543',
 '1757,638 1773,632 1790,613 1803,580 1820,543 1833,520 1848,503', '1847,427 1854,427'].forEach(pts => line(price, pts, '#99cc00', 4));

// heavy levels
hline(331.5, 'red', 7);
hline(392.5, '#ff9900', 5);
hline(517.5, 'cyan', 5);
hline(581.5, 'blue', 7);
hline(757.5, '#99ccff', 1);
hline(802.5, '#cc99ff', 1);
hline(848, '#808080', 2, 49);
hline(851.5, 'blue', 1, 49, 1862);

// envelopes
['49,464 75,455 85,447 98,432 135,414 157,398 172,389 184,386 208,387 225,393 235,400 265,421 290,437 304,451 325,474 345,499 361,530 380,572 392,597 405,650 411,667 438,696 450,700 470,722 485,735 515,729 540,716 560,714 600,718 620,715 640,706 660,703 720,705 760,699 800,706 835,710 870,708 895,712 935,712 965,717 995,719 1020,716 1060,714 1080,708 1095,697 1110,668 1125,642 1140,590 1163,510 1185,465 1195,445 1210,395 1222,345 1235,300 1250,264 1265,245 1285,215 1310,190 1335,166 1355,158 1390,152 1405,142 1420,138 1440,140 1455,143 1480,142 1490,148 1515,150 1535,154 1542,162 1560,161 1575,163 1590,169 1605,171 1660,171 1668,167 1680,157 1700,149 1725,136 1740,124 1750,122 1765,130 1785,150 1810,180 1830,218 1838,230 1855,240',
 '49,569 60,568 80,585 100,620 125,650 145,690 160,720 180,760 195,788 220,815 240,828 265,845 285,866 306,882',
 '401,880 406,868 411,863 430,862 452,863 470,856 490,853 600,855 645,856 670,852 690,842 720,832 740,831 770,818 800,797 835,783 890,782 935,774 1020,775 1035,768 1065,764 1090,769 1108,785 1125,800 1143,822 1152,850 1163,867 1178,876 1195,878 1199,882',
 '1284,882 1300,860 1347,784 1408,649 1425,600 1452,513 1468,470 1479,447 1491,418 1511,410 1529,390 1543,370 1550,368 1577,375 1603,380 1610,376 1660,378 1670,387 1677,403 1700,433 1713,453 1727,483 1743,523 1758,557 1773,572 1790,582 1807,584 1827,581 1840,581 1855,587']
    .forEach(pts => line(price, pts, 'lime', 5));
['49,478 62,478 75,475 95,466 120,459 150,447 165,441 185,427 205,418 216,416 265,415 300,411 350,407 375,406 450,417 500,431 560,446 585,455 620,465 637,475 660,494 686,514 710,532 735,553 760,572 784,593 805,616 821,640 836,663 848,684 870,692 900,702 925,705 1000,701 1060,699 1095,689 1120,668 1140,645 1160,608 1175,577 1192,540 1204,518 1218,480 1230,447 1250,408 1268,390 1282,367 1307,347 1343,305 1389,267 1411,237 1432,208 1454,187 1479,155 1518,132 1543,118 1587,108 1630,96 1653,92 1670,93 1710,101 1750,112 1790,126 1827,139 1855,151']
    .forEach(pts => line(price, pts, 'magenta', 7));
['49,594 60,592 80,596 98,611 130,630 160,662 190,695 215,715 240,732 260,742 285,760 310,780 335,800 360,822 400,845 430,864 466,882',
 '806,882 820,872 835,855 848,839 870,834 905,830 945,829 970,826 1060,826 1075,824 1095,825 1125,831 1145,845 1155,865 1170,882',
 '1553,882 1577,860 1690,756 1760,700 1800,653 1853,599'].forEach(pts => line(price, pts, 'magenta', 5));

hline(454.5, 'lime', 7, 49, 1862);
hline(458.5, '#808080', 1, 49, 1862);
hline(462.5, '#808080', 1, 49, 1862);
hline(466.5, '#808080', 1, 49, 1862);
hline(468.5, 'black', 1, 49, 1862);
hline(470.5, '#993300', 3, 49, 1862);

// oversold spikes hanging from one level
function spikes(x1, x2, peak, depth) {
    let d = '';
    for (let x = x1; x <= x2; x++) {
        const near = 1 - Math.abs(x - peak) / Math.max(peak - x1 + 1, x2 - peak + 1);
        d += `M${x}.5 623V${Math.round(623 + 8 + depth * near * (0.55 + 0.45 * random()))}`;
    }
    add(price, 'path', { d, stroke: 'red' });
}
spikes(60, 76, 64, 130);
spikes(72, 84, 76, 110);
spikes(82, 101, 96, 110);
spikes(132, 148, 141, 75);
spikes(146, 160, 154, 70);
spikes(164, 186, 173, 60);
spikes(322, 338, 330, 36);
spikes(1491, 1494, 1492, 25);
spikes(1548, 1550, 1549, 22);
spikes(1663, 1686, 1671, 120);
spikes(1667, 1677, 1672, 200);
spikes(1698, 1706, 1701, 50);
spikes(1712, 1755, 1740, 70);
spikes(1731, 1740, 1735, 112);
line(price, '64,700 64,843', 'red', 1, { 'stroke-dasharray': '4 3' });
line(price, '1673,800 1673,858', 'red', 1, { 'stroke-dasharray': '3 3' });
add(price, 'polygon', { points: '1145,224 1149,180 1151,130 1153,130 1155,180 1159,224', fill: '#33cccc' });
add(price, 'path', { d: 'M1143.5 185V224M1155.500 115V140M1110.500 214V222', stroke: '#33cccc', 'stroke-dasharray': '4 3' });

// candles
let rise = '';
let fall = '';
series.forEach(([x, y], i) => {
    if (!i) return;
    const prev = series[i - 1][1];
    const reach = (x > 1136 && x < 1500 ? 20 : 9) * random();
    const d = `M${x}.5 ${Math.round(Math.min(y, prev) - reach)}V${Math.round(Math.max(y, prev) + reach * 0.8)}`;
    if (y < prev) rise += d;
    else fall += d;
});
add(price, 'path', { d: fall, stroke: '#1259c8' });
add(price, 'path', { d: rise, stroke: '#e6190a' });
add(price, 'path', { d: 'M1254.500 380V497M1163.500 440V503M1700.500 470V603', stroke: '#1259c8' });
line(price, average(series, 4).map(([x, y]) => `${x + 1},${Math.round(y)}`).join(' '), 'blue', 1);

// parabolic stops
['66,605 72,640', '103,604 110,625 120,650', '132,665 142,720 150,740 158,760', '166,747 172,770 180,810', '196,761 208,770',
 '247,695 258,715 266,745 272,780 280,798', '297,767 320,800 325,820', '345,822 362,826', '380,774 392,790 398,820', '412,815 425,830',
 '460,790 470,800', '497,712 508,740', '538,700 544,740 552,775', '572,735 582,748', '612,702 628,720', '640,712 650,730 660,755 680,768',
 '734,719 755,735', '759,718 768,745', '810,736 816,744', '850,712 862,722 882,732', '916,727 932,738', '952,735 965,770',
 '1014,719 1027,724', '1133,474 1142,485', '1157,267 1162,300 1165,360', '1175,343 1185,370 1190,404', '1218,187 1224,196',
 '1229,137 1240,170 1250,210 1254,240', '1275,262 1282,280', '1285,277 1293,310 1300,345', '1340,275 1346,300 1350,310',
 '1375,298 1388,320', '1402,139 1413,170', '1421,144 1435,165', '1437,165 1450,188', '1464,117 1480,145 1488,195', '1513,235 1521,280',
 '1540,262 1550,345', '1563,278 1577,320', '1587,280 1601,292', '1617,281 1640,325', '1655,322 1664,345 1668,410', '1685,428 1692,440',
 '1730,510 1740,580', '1792,430 1800,434', '1810,427 1822,452'].forEach(pts => line(price, pts, 'blue', 4, { 'stroke-dasharray': '1 4' }));
['70,744 80,720', '83,735 103,690', '188,825 192,800 197,780', '208,780 220,760 235,740', '238,740 250,720', '366,835 376,800',
 '402,828 418,820', '428,845 445,835', '472,825 482,810 490,780', '508,770 520,755 528,735', '552,795 565,785', '582,778 592,760',
 '630,753 645,730', '683,805 700,785 717,765', '776,785 790,765 800,755', '815,757 840,752', '858,755 868,738', '895,754 905,735',
 '934,753 948,746', '965,770 985,755', '999,770 1012,740', '1030,742 1050,726', '1060,728 1085,690 1095,670', '1150,400 1156,330',
 '1190,485 1200,400 1210,280', '1258,495 1264,420 1270,330 1273,300', '1307,353 1315,330 1325,305', '1350,347 1375,318',
 '1387,345 1394,270 1400,200', '1415,218 1425,190', '1494,352 1505,310 1513,270', '1524,308 1538,294', '1551,388 1557,370',
 '1576,345 1587,310', '1603,313 1622,297', '1648,360 1658,352', '1673,555 1680,500 1682,460', '1706,603 1725,555',
 '1745,620 1758,600 1765,540 1778,500 1790,470', '1852,536 1853,534'].forEach(pts => line(price, pts, 'red', 4, { 'stroke-dasharray': '1 4' }));

// lagging span
['1067,433 1071,410 1086,407 1093,287 1100,260 1104,317 1111,230 1114,233 1120,333 1125,250 1136,303 1143,225', '490,332 496,288 500,332',
 '1480,470 1490,520 1498,510 1508,560 1530,545 1545,560 1555,500 1565,560 1575,530 1585,490 1600,520 1615,490 1630,560 1645,615 1655,560',
 '1235,380 1240,360 1246,420 1255,440 1275,450 1290,520'].forEach(pts => line(price, pts, 'white', 1, { 'stroke-dasharray': '4 3' }));
for (let x = 210; x < 1300; x += 9 + Math.round(random() * 30)) {
    add(price, 'path', { d: `M${x}.5 515v3M${x + 4}.5 ${579 + Math.round(random() * 3)}v3`, stroke: 'white' });
}

// signal arrows
function arrow(x, y, color, s) {
    add(price, 'polygon', { points: `${x},${y - 4 * s} ${x + 4},${y} ${x + 2},${y} ${x + 2},${y + 4 * s} ${x - 2},${y + 4 * s} ${x - 2},${y} ${x - 4},${y}`, fill: color });
}
arrow(55, 477, 'purple', 1);
arrow(1061, 722, 'purple', 1);
arrow(1462, 163, 'purple', 1);
arrow(1419, 190, 'lime', 1);
arrow(1440, 221, 'lime', 1);
arrow(1156, 258, '#dd0022', -1);
arrow(153, 785, 'red', 1);
arrow(165, 796, 'red', 1);

// volume pane
const strength = sample(points(`49,993 53,990 54,895 57,930 62,985 68,995 75,1015 80,1000 90,995 100,975 106,990 115,1003 128,985
    140,990 147,970 152,990 162,977 172,998 185,990 198,973 208,985 222,978 240,990 255,997 275,993 295,982 308,992 320,987
    325,1005 335,992 350,985 378,985 383,993 410,985 420,990 440,980 465,993 490,978 505,990 520,982 540,990 560,988 590,985
    603,995 635,980 650,988 675,998 690,987 720,987 737,990 757,985 795,990 846,985 873,992 895,986 935,987 958,993 968,985
    1010,990 1060,987 1067,980 1082,994 1093,978 1110,990 1125,970 1132,990 1145,975 1150,955 1155,938 1160,970 1165,1010
    1175,1003 1182,995 1190,975 1198,945 1205,975 1214,940 1220,1005 1226,970 1235,1010 1250,1003 1257,1012 1265,990
    1272,975 1280,990 1295,990 1308,974 1315,985 1323,973 1340,995 1355,987 1385,990 1392,960 1399,935 1405,980 1416,975
    1425,1015 1437,990 1447,1010 1460,980 1463,925 1470,970 1480,1020 1490,1005 1502,977 1515,987 1530,985 1548,1000
    1557,977 1575,985 1604,980 1620,990 1640,998 1655,985 1672,1015 1682,975 1692,985 1700,1010 1715,985 1727,977
    1735,1000 1750,985 1765,975 1780,982 1790,980 1810,993 1825,987 1850,990 1853,1000`), 3);
const signal = sample(points(`49,1018 54,1017 60,1005 71,991 85,1003 110,997 130,998 140,1004 165,1001 185,1011 215,1007 237,997
    250,997 280,1008 305,1012 322,1014 335,1025 365,1027 440,1030 460,1024 485,1028 505,1023 530,1022 540,1016 600,1017 665,1016
    675,1022 700,1023 820,1028 960,1029 1020,1033 1060,1033 1080,1025 1106,1015 1125,1010 1147,1000 1160,978 1168,973 1180,978
    1190,985 1205,965 1216,935 1229,914 1240,922 1252,930 1262,953 1280,957 1304,967 1325,960 1345,966 1390,969 1400,960 1407,947
    1435,937 1455,942 1462,940 1478,917 1487,932 1496,948 1505,950 1520,958 1545,962 1555,970 1573,970 1610,962 1630,964 1645,973
    1662,975 1675,990 1700,993 1715,1012 1735,1019 1745,1030 1755,1034 1775,1027 1810,1022 1854,1024`), 0);
const orders = sample(points(`49,1020 53,1015 54,975 60,985 66,1000 85,1002 100,992 110,999 130,998 138,1011 150,1002 165,1003 176,1012
    190,1011 213,1005 222,996 237,997 250,998 285,1012 305,1012 322,1015 326,1026 365,1027 440,1029 447,1023 485,1027 495,1020
    530,1020 535,1014 545,1017 600,1017 665,1016 675,1024 700,1022 820,1028 960,1029 1020,1034 1060,1031 1064,1025 1085,1023
    1093,1015 1106,1012 1122,1010 1125,998 1145,998 1149,980 1155,968 1160,965 1170,976 1178,980 1190,987 1196,968 1203,950
    1211,930 1215,896 1219,940 1226,903 1230,916 1245,928 1250,938 1256,957 1268,955 1280,962 1304,968 1322,957 1345,966
    1388,969 1392,952 1399,935 1403,945 1410,947 1415,930 1422,938 1435,937 1447,946 1460,938 1463,910 1468,912 1474,914
    1481,931 1490,955 1494,950 1505,949 1512,953 1520,960 1545,962 1552,974 1558,969 1573,969 1583,964 1610,962 1630,965 1643,975
    1662,976 1674,998 1680,990 1700,992 1703,1010 1720,1015 1735,1020 1742,1032 1755,1034 1775,1026 1810,1021 1854,1025`), 1);

between(volume, orders, signal, '#ff9900', 'blue');
between(volume, strength, average(strength, 14), '#008833', '#ccffff');
line(volume, strength.map(([x, y]) => `${x},${Math.round(y)}`).join(' '), '#008833', 1, { 'stroke-dasharray': '5 2' });

let red = '';
let navy = '';
for (let x = 49; x < 1855; x++) {
    let size = 8;
    if (x < 200) size = 22;
    else if (x < 340) size = 12;
    else if (x > 1090 && x < 1140) size = 18;
    else if (x >= 1140 && x < 1240) size = 48;
    else if (x >= 1240 && x < 1380) size = 22;
    else if (x >= 1380 && x < 1500) size = 38;
    else if (x >= 1500 && x < 1660) size = 18;
    else if (x >= 1660 && x < 1760) size = 26;
    else if (x > 700 && x < 1060) size = 5;
    const h = Math.round(1 + size * Math.pow(random(), 2) * (random() > 0.96 ? 1.8 : 0.9));
    if (random() < 0.6) red += `M${x}.5 1037v-${h}`;
    else navy += `M${x}.5 1037v-${Math.ceil(h / 2)}`;
}
[[54, 70], [71, 36], [98, 28], [139, 45], [147, 30], [199, 24], [237, 20], [323, 30], [491, 25], [521, 20], [544, 26], [635, 22],
 [875, 20], [1121, 46], [1155, 45], [1197, 60], [1210, 45], [1214, 70], [1225, 90], [1282, 26], [1398, 64], [1416, 58], [1463, 50],
 [1476, 44], [1519, 26], [1549, 26], [1664, 32], [1700, 68], [1736, 24], [1851, 24]]
    .forEach(([x, h]) => { red += `M${x}.5 1037v-${h}`; });
add(volume, 'path', { d: red, stroke: '#e6190a' });
add(volume, 'path', { d: navy, stroke: '#1259c8' });
line(volume, '49,1020 67,1007 89,999 134,998 179,1006 214,1010 237,1002 250,998 268,998 312,1010 339,1018 362,1026 437,1029 504,1026 536,1020 571,1017 665,1016 707,1023 819,1027 952,1029 1019,1033 1060,1033 1086,1029 1113,1019 1149,1003 1176,982 1207,970 1238,930 1249,923 1255,923 1278,943 1298,958 1340,964 1387,968 1415,956 1438,941 1458,939 1478,931 1502,932 1525,954 1549,959 1573,968 1600,968 1628,964 1664,971 1695,987 1727,1004 1747,1020 1765,1028 1782,1030 1810,1023 1854,1023', '#993300', 3);
line(volume, signal.map(([x, y]) => `${x},${Math.round(y)}`).join(' '), 'blue', 1);
```
